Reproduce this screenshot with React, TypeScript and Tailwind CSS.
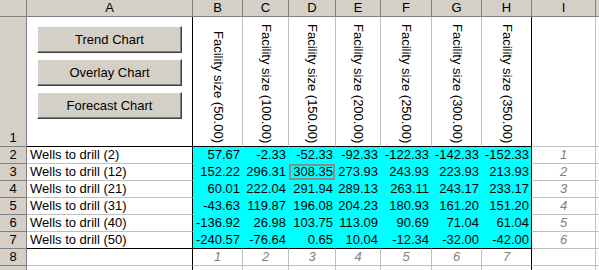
import React from "react";

const COLS = ["A", "B", "C", "D", "E", "F", "G", "H", "I", ""];

const SIZES = ["50.00", "100.00", "150.00", "200.00", "250.00", "300.00", "350.00"];

const ROWS = [
  { label: "Wells to drill (2)", vals: ["57.67", "-2.33", "-52.33", "-92.33", "-122.33", "-142.33", "-152.33"] },
  { label: "Wells to drill (12)", vals: ["152.22", "296.31", "308.35", "273.93", "243.93", "223.93", "213.93"] },
  { label: "Wells to drill (21)", vals: ["60.01", "222.04", "291.94", "289.13", "263.11", "243.17", "233.17"] },
  { label: "Wells to drill (31)", vals: ["-43.63", "119.87", "196.08", "204.23", "180.93", "161.20", "151.20"] },
  { label: "Wells to drill (40)", vals: ["-136.92", "26.98", "103.75", "113.09", "90.69", "71.04", "61.04"] },
  { label: "Wells to drill (50)", vals: ["-240.57", "-76.64", "0.65", "10.04", "-12.34", "-32.00", "-42.00"] },
];

const hdr = "bg-[#d4d0c8] border-r border-b border-[#808080] flex items-center justify-center text-[13px] text-black";
const cell = "bg-white border-r border-b border-[#c0c0c0]";

function XlButton({ label }: { label: string }) {
  return (
    <div className="w-[145px] h-[27px] bg-[#d4d0c8] border border-t-white border-l-white border-b-[#404040] border-r-[#404040] shadow-[inset_-1px_-1px_0_#808080] flex items-center justify-center text-[13px] text-black">
      {label}
    </div>
  );
}

export default function App() {
  return (
    <div className="w-[599px] h-[270px] overflow-hidden bg-white font-['Liberation_Sans',Arial,sans-serif]">
      <div className="grid grid-cols-[27px_166px_50px_46px_47px_45px_51px_50px_50px_64px_20px] grid-rows-[17px_130px_repeat(8,17px)] leading-[16px]">
        {/* Column headers */}
        <div className={hdr} />
        {COLS.map((c, i) => (
          <div key={i} className={hdr}>{c}</div>
        ))}

        {/* Row 1 */}
        <div className={`${hdr} !items-end`}>1</div>
        <div className="bg-white border-r border-b border-black flex flex-col gap-[6px] pt-[9px] pl-[10px]">
          <XlButton label="Trend Chart" />
          <XlButton label="Overlay Chart" />
          <XlButton label="Forecast Chart" />
        </div>
        {SIZES.map((s, i) => (
          <div
            key={s}
            className={`bg-white border-b border-black border-r ${i === 6 ? "border-r-black" : "border-r-[#c0c0c0]"} flex justify-center items-end pb-[3px] text-[13px] text-black`}
          >
            <span className="[writing-mode:vertical-rl] whitespace-nowrap">Facility size ({s})</span>
          </div>
        ))}
        <div className={cell} />
        <div className={cell} />

        {/* Rows 2-7 */}
        {ROWS.map((r, ri) => {
          const last = ri === ROWS.length - 1;
          return (
            <React.Fragment key={r.label}>
              <div className={hdr}>{ri + 2}</div>
              <div className={`bg-white border-r border-r-black border-b ${last ? "border-b-black" : "border-b-[#c0c0c0]"} pl-[3px] text-[13px] text-black whitespace-nowrap`}>
                {r.label}
              </div>
              {r.vals.map((v, vi) => (
                <div
                  key={vi}
                  className={`bg-[#00ffff] border-r border-b ${vi === 6 ? "border-r-black" : "border-r-[#00ffff]"} ${last ? "border-b-black" : "border-b-[#00ffff]"} ${ri === 1 && vi === 2 ? "shadow-[inset_0_0_0_2px_#8c8c8c]" : ""} text-right pr-[2px] text-[13px] text-black`}
                >
                  {v}
                </div>
              ))}
              <div className={`${cell} text-center italic text-[13px] text-[#808080]`}>{ri + 1}</div>
              <div className={cell} />
            </React.Fragment>
          );
        })}

        {/* Row 8 */}
        <div className={hdr}>8</div>
        <div className={`${cell} !border-r-black`} />
        {SIZES.map((s, i) => (
          <div
            key={s}
            className={`${cell} ${i === 6 ? "!border-r-black" : ""} text-center italic text-[13px] text-[#808080]`}
          >
            {i + 1}
          </div>
        ))}
        <div className={cell} />
        <div className={cell} />

        {/* Row 9 (only its top edge shows) */}
        <div className={hdr} />
        <div className={`${cell} !border-r-black`} />
        {SIZES.map((s, i) => (
          <div key={s} className={`${cell} ${i === 6 ? "!border-r-black" : ""}`} />
        ))}
        <div className={cell} />
        <div className={cell} />
      </div>
    </div>
  );
}
